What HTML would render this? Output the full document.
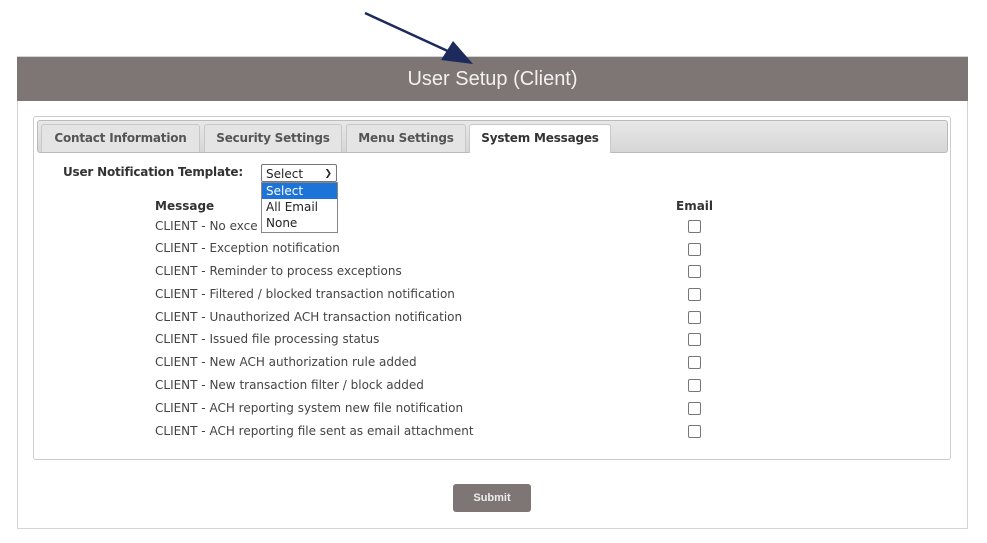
<!DOCTYPE html>
<html><head><style>
body{margin:0;width:987px;height:543px;background:#fff;position:relative;overflow:hidden;font-family:"DejaVu Sans","Liberation Sans",sans-serif;}
.abs{position:absolute}
#panel{left:17px;top:56px;width:949px;height:471px;border:1px solid #d4d4d4;background:#fff}
#hdr{left:17px;top:57px;width:951px;height:44px;background:#7e7575;color:#f4f0f0;font-family:"Liberation Sans",sans-serif;font-size:20px;text-align:center;line-height:44px}
#box{left:33px;top:116px;width:916px;height:342px;border:1px solid #ccc;border-radius:3px}
#tabs{left:37px;top:120px;width:909px;height:31px;background:linear-gradient(#e8e8e8,#d6d6d6);border:1px solid #bbb;border-radius:3px}
.tab{position:absolute;top:124px;height:27px;line-height:27px;font-size:12px;font-weight:bold;color:#555;background:#e4e4e4;border:1px solid #c8c8c8;border-bottom:none;border-radius:3px 3px 0 0;text-align:center;letter-spacing:-0.2px}
.row{position:absolute;left:155px;font-size:12px;color:#444}
.cb{position:absolute;left:688px;width:11px;height:11px;border:1px solid #777;border-radius:2px;background:#fff}
</style></head><body>
<div class="abs" id="panel"></div>
<div class="abs" id="hdr">User Setup (Client)</div>
<svg class="abs" style="left:0;top:0" width="987" height="100"><line x1="365" y1="13" x2="452" y2="53" stroke="#1d2a5c" stroke-width="2.5"/><polygon points="473,64 441,60 453,41" fill="#1d2a5c"/></svg>
<div class="abs" id="box"></div>
<div class="abs" id="tabs"></div>
<div class="tab" style="left:41px;width:157px">Contact Information</div>
<div class="tab" style="left:204px;width:136px">Security Settings</div>
<div class="tab" style="left:346px;width:118px">Menu Settings</div>
<div class="tab" style="left:469px;width:140px;background:#fff;height:28px;color:#333">System Messages</div>
<div class="abs" style="left:63px;top:165px;font-size:12px;font-weight:bold;color:#333;letter-spacing:-0.2px">User Notification Template:</div>
<div class="abs" style="left:261px;top:164px;height:18px;border:1px solid #777;border-radius:2px;font-size:12px;line-height:18px;padding-left:4px;box-sizing:border-box;color:#222;width:76px">Select<span style="position:absolute;right:4px;font-size:9px;font-weight:bold">&#10095;</span></div>
<div class="abs" style="left:261px;top:182px;width:75px;height:49px;border:1px solid #888;background:#fff;font-size:12px;line-height:16px;color:#222">
<div style="background:#1e73d8;color:#fff;padding-left:4px">Select</div><div style="padding-left:4px">All Email</div><div style="padding-left:4px">None</div></div>
<div class="abs" style="left:155px;top:199px;font-size:12px;font-weight:bold;color:#333">Message</div>
<div class="abs" style="left:676px;top:199px;font-size:12px;font-weight:bold;color:#333">Email</div>
<div class="row" style="top:219px">CLIENT - No exce</div>
<div class="row" style="top:241px">CLIENT - Exception notification</div>
<div class="row" style="top:264px">CLIENT - Reminder to process exceptions</div>
<div class="row" style="top:287px">CLIENT - Filtered / blocked transaction notification</div>
<div class="row" style="top:310px">CLIENT - Unauthorized ACH transaction notification</div>
<div class="row" style="top:332px">CLIENT - Issued file processing status</div>
<div class="row" style="top:355px">CLIENT - New ACH authorization rule added</div>
<div class="row" style="top:378px">CLIENT - New transaction filter / block added</div>
<div class="row" style="top:401px">CLIENT - ACH reporting system new file notification</div>
<div class="row" style="top:424px">CLIENT - ACH reporting file sent as email attachment</div>
<div class="cb" style="top:220px"></div><div class="cb" style="top:243px"></div><div class="cb" style="top:265px"></div><div class="cb" style="top:288px"></div><div class="cb" style="top:311px"></div><div class="cb" style="top:333px"></div><div class="cb" style="top:356px"></div><div class="cb" style="top:379px"></div><div class="cb" style="top:402px"></div><div class="cb" style="top:425px"></div>
<div class="abs" style="left:453px;top:484px;width:78px;height:28px;background:#7e7575;border-radius:3px;color:#eee;font-family:'Liberation Sans',sans-serif;font-size:11px;font-weight:bold;text-align:center;line-height:28px">Submit</div>
</body></html>
